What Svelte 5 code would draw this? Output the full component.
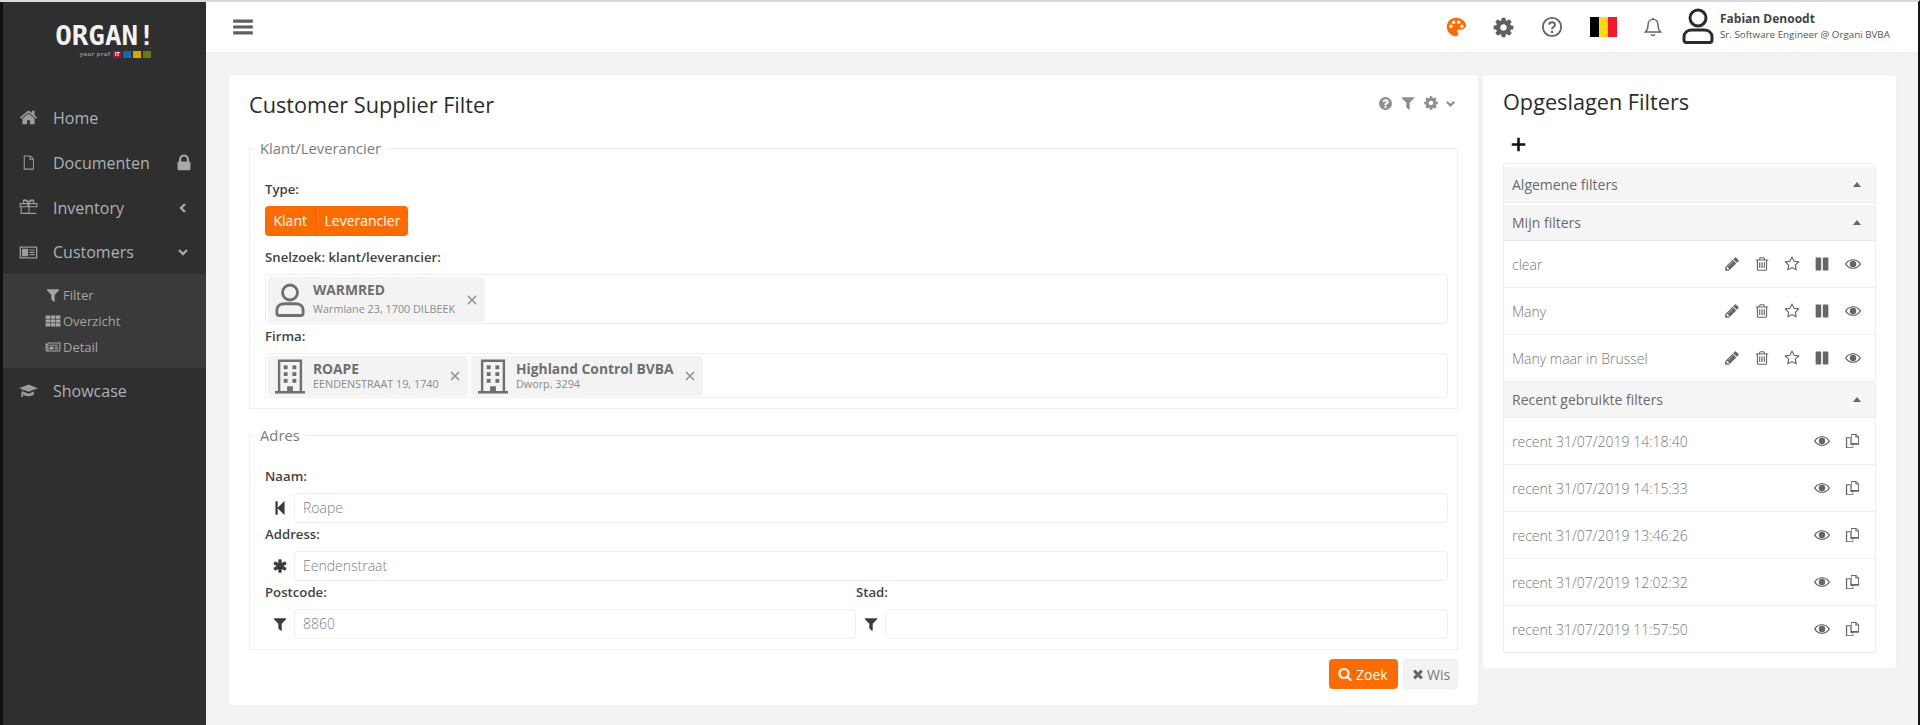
<script>
  const P = {
    home: "M1472 992v480q0 26-19 45t-45 19h-384v-384h-256v384h-384q-26 0-45-19t-19-45v-480q0-1 .5-3t.5-3l575-474 575 474q1 2 1 6zm223-69l-62 74q-8 9-21 11h-3q-13 0-21-7l-692-577-692 577q-12 8-24 7-13-2-21-11l-62-74q-8-10-7-23.500t11-21.500l719-599q32-26 76-26t76 26l244 204v-195q0-14 9-23t23-9h192q14 0 23 9t9 23v408l219 182q10 8 11 21.500t-7 23.500z",
    lock: "M640 768h512v-192q0-106-75-181t-181-75-181 75-75 181v192zm832 96v576q0 40-28 68t-68 28h-960q-40 0-68-28t-28-68v-576q0-40 28-68t68-28h32v-192q0-184 132-316t316-132 316 132 132 316v192h32q40 0 68 28t28 68z",
    filter: "M1595 295q17 41-14 70l-493 493v742q0 42-39 59-13 5-25 5-27 0-45-19l-256-256q-19-19-19-45v-486l-493-493q-31-29-14-70 17-39 59-39h1280q42 0 59 39z",
    cog: "M1152 896q0-106-75-181t-181-75-181 75-75 181 75 181 181 75 181-75 75-181zm512-109v222q0 12-8 23t-20 13l-185 28q-19 54-39 91 35 50 107 138 10 12 10 25t-9 23q-27 37-99 108t-94 71q-12 0-26-9l-138-108q-44 23-91 38-16 136-29 186-7 28-36 28h-222q-14 0-24.500-8.500t-11.500-21.500l-28-184q-49-16-90-37l-141 107q-10 9-25 9-14 0-25-11-126-114-165-168-7-10-7-23 0-12 8-23 15-21 51-66.500t54-70.500q-27-50-41-99l-183-27q-13-2-21-12.500t-8-23.500v-222q0-12 8-23t19-13l186-28q14-46 39-92-40-57-107-138-10-12-10-24 0-10 9-23 26-36 98.500-107.500t94.500-71.500q13 0 26 10l138 107q44-23 91-38 16-136 29-186 7-28 36-28h222q14 0 24.500 8.500t11.500 21.500l28 184q49 16 90 37l142-107q9-9 24-9 13 0 25 10 129 119 165 170 7 8 7 22 0 12-8 23-15 21-51 66.500t-54 70.500q26 50 41 98l183 28q13 2 21 12.500t8 23.500z",
    help: "M1024 1376v-192q0-14-9-23t-23-9h-192q-14 0-23 9t-9 23v192q0 14 9 23t23 9h192q14 0 23-9t9-23zm256-672q0-88-55.500-163t-138.500-116-170-41q-243 0-371 213-15 24 8 42l132 100q7 6 19 6 16 0 25-12 53-68 86-92 34-24 86-24 48 0 85.500 26t37.500 59q0 38-20 61t-68 45q-63 28-115.500 86.500t-52.500 125.500v36q0 14 9 23t23 9h192q14 0 23-9t9-23q0-19 21.500-49.500t54.500-49.500q32-18 49-28.500t46-35 44.500-48 28-60.500 12.500-81zm384 192q0 209-103 385.500t-279.500 279.500-385.500 103-385.500-103-279.500-279.500-103-385.500 103-385.500 279.500-279.500 385.500-103 385.500 103 279.500 279.500 103 385.500z",
    search: "M1216 832q0-185-131.500-316.500t-316.500-131.500-316.500 131.500-131.500 316.500 131.500 316.500 316.500 131.500 316.500-131.500 131.500-316.500zm512 832q0 52-38 90t-90 38q-54 0-90-38l-343-342q-179 124-399 124-143 0-273.500-55.500t-225-150-150-225-55.500-273.500 55.500-273.500 150-225 225-150 273.500-55.500 273.500 55.500 225 150 150 225 55.500 273.500q0 220-124 399l343 343q37 37 37 90z",
    times: "M1490 1322q0 40-28 68l-136 136q-28 28-68 28t-68-28l-294-294-294 294q-28 28-68 28t-68-28l-136-136q-28-28-28-68t28-68l294-294-294-294q-28-28-28-68t28-68l136-136q28-28 68-28t68 28l294 294 294-294q28-28 68-28t68 28l136 136q28 28 28 68t-28 68l-294 294 294 294q28 28 28 68z",
    back: "M1363 141q19-19 32-13t13 32v1472q0 26-13 32t-32-13l-710-710q-9-9-13-19v678q0 26-19 45t-45 19h-128q-26 0-45-19t-19-45v-1408q0-26 19-45t45-19h128q26 0 45 19t19 45v678q4-10 13-19z",
    asterisk: "M1546 1050q46 26 59.500 77.500t-12.500 97.500l-64 110q-26 46-77.500 59.500t-97.500-12.500l-266-153v307q0 52-38 90t-90 38h-128q-52 0-90-38t-38-90v-307l-266 153q-46 26-97.500 12.500t-77.500-59.500l-64-110q-26-46-12.500-97.500t59.500-77.500l266-154-266-154q-46-26-59.500-77.500t12.500-97.500l64-110q26-46 77.500-59.500t97.500 12.500l266 153v-307q0-52 38-90t90-38h128q52 0 90 38t38 90v307l266-153q46-26 97.500-12.500t77.500 59.500l64 110q26 46 12.500 97.500t-59.500 77.500l-266 154z",
    pencil: "M491 1536l91-91-235-235-91 91v107h128v128h107zm523-928q0-22-22-22-10 0-17 7l-542 542q-7 7-7 17 0 22 22 22 10 0 17-7l542-542q7-7 7-17zm-54-192l416 416-832 832h-416v-416zm683 96q0 53-37 90l-166 166-416-416 166-165q36-38 90-38 53 0 91 38l235 234q37 39 37 91z",
    trash: "M704 736v576q0 14-9 23t-23 9h-64q-14 0-23-9t-9-23v-576q0-14 9-23t23-9h64q14 0 23 9t9 23zm256 0v576q0 14-9 23t-23 9h-64q-14 0-23-9t-9-23v-576q0-14 9-23t23-9h64q14 0 23 9t9 23zm256 0v576q0 14-9 23t-23 9h-64q-14 0-23-9t-9-23v-576q0-14 9-23t23-9h64q14 0 23 9t9 23zm128 724v-948h-896v948q0 22 7 40.500t14.500 27 10.500 8.500h832q3 0 10.500-8.500t14.500-27 7-40.500zm-672-1076h448l-48-117q-7-9-17-11h-317q-10 2-17 11zm928 32v64q0 14-9 23t-23 9h-96v948q0 83-47 143.500t-113 60.500h-832q-66 0-113-58.500t-47-141.500v-952h-96q-14 0-23-9t-9-23v-64q0-14 9-23t23-9h309l70-167q15-37 54-63t79-26h320q40 0 79 26t54 63l70 167h309q14 0 23 9t9 23z",
    star: "M1201 1004l306-297-422-62-189-382-189 382-422 62 306 297-73 421 378-199 377 199zm527-357q0 22-26 48l-363 354 86 500q1 7 1 20 0 50-41 50-19 0-40-12l-449-236-449 236q-22 12-40 12-21 0-31.500-14.500t-10.500-35.500q0-6 2-20l86-500-364-354q-25-27-25-48 0-37 56-46l502-73 225-455q19-41 49-41t49 41l225 455 502 73q56 9 56 46z",
    pause: "M265 168h460q80 0 80 80v1296q0 80-80 80h-460q-80 0-80-80v-1296q0-80 80-80zM1067 168h460q80 0 80 80v1296q0 80-80 80h-460q-80 0-80-80v-1296q0-80 80-80z",
    plus: "M1030 180h-268v582h-582v268h582v582h268v-582h582v-268h-582z",
    bars: "M96 288h1600v256h-1600zM96 768h1600v256h-1600zM96 1248h1600v256h-1600z",
    th: "M64 288h512v352h-512zM640 288h512v352h-512zM1216 288h512v352h-512zM64 720h512v352h-512zM640 720h512v352h-512zM1216 720h512v352h-512zM64 1152h512v352h-512zM640 1152h512v352h-512zM1216 1152h512v352h-512z",
    eye: "M896 416c-380 0-690 260-800 480 110 220 420 480 800 480s690-260 800-480c-110-220-420-480-800-480zm0 112c270 0 520 160 650 368-130 208-380 368-650 368s-520-160-650-368c130-208 380-368 650-368zm0 48a320 320 0 1 0 0 640 320 320 0 0 0 0-640z",
    copy: "M800 192h512l288 288v800h-576v320h-736v-1088h512zm64 96v816h640v-560h-272v-256zm464 24v144h144zm-592 304h-320v896h544v-224h-224z",
    file: "M448 224h640l320 320v1024h-960zm96 96v1152h768v-832h-320v-320zm544 32v192h192z",
    idcard: "M64 320h1664v1152h-1664zm128 128v896h1408v-896zm96 96h576v704h-576zm700 64h480v110h-480zm0 220h480v110h-480zm0 220h480v110h-480z",
    gift: "M896 330c-120-260-560-280-560 0 0 70 40 120 100 150h-380v400h96v620h1488v-620h96v-400h-380c60-30 100-80 100-150 0-280-440-260-560 0zm-60 150h-220c-100 0-180-60-160-130 30-80 290-60 380 130zm120 0c90-190 350-210 380-130 20 70-60 130-160 130zm-800 100h640v200h-640zm740 0h0v200h0zm100 0h640v200h-640zm-740 300h640v520h-640zm740 0h640v520h-640z",
    cap: "M896 320l896 352-896 352-500-196c-40 50-60 130-64 220 40 20 64 50 64 90 0 30-14 56-36 74l36 300h-192l36-300c-22-18-36-44-36-74 0-42 26-72 64-92 4-110 26-200 70-266l-338-108zm-510 680v260c0 100 230 180 510 180s510-80 510-180v-260l-510 200z",
    news: "M64 512h256v-128h1408v896c0 70-50 128-128 128h-1408c-70 0-128-58-128-128zm128 128v640h64v-640zm192-128v768h1216v-768zm128 128h960v128h-960zm0 224h448v320h-448zm576 0h384v128h-384zm0 192h384v128h-384z"
  };

  const menuTop = [
    { icon: "home", label: "Home" },
    { icon: "file", label: "Documenten", right: "lock" },
    { icon: "gift", label: "Inventory", right: "left" },
    { icon: "idcard", label: "Customers", right: "down" }
  ];
  const sub = [
    { icon: "filter", label: "Filter" },
    { icon: "th", label: "Overzicht" },
    { icon: "news", label: "Detail" }
  ];
  const mine = ["clear", "Many", "Many maar in Brussel"];
  const recent = [
    "recent 31/07/2019 14:18:40",
    "recent 31/07/2019 14:15:33",
    "recent 31/07/2019 13:46:26",
    "recent 31/07/2019 12:02:32",
    "recent 31/07/2019 11:57:50"
  ];
</script>

{#snippet ic(name, cls)}
  <svg class="ic {cls}" viewBox="0 0 1792 1792" fill="currentColor" aria-hidden="true"><path fill-rule="evenodd" d={P[name]} /></svg>
{/snippet}

{#snippet person(cls)}
  <svg class={cls} viewBox="0 0 32 36" fill="none" stroke="currentColor" stroke-width="3" aria-hidden="true">
    <circle cx="16" cy="10" r="8" />
    <path d="M10 22h12c4.500 0 8 2.500 8 7v3c0 1.500-1 2.500-2.500 2.500h-23c-1.500 0-2.500-1-2.500-2.500v-3c0-4.500 3.500-7 8-7z" />
  </svg>
{/snippet}

{#snippet building()}
  <svg class="chip-ic building" viewBox="0 0 31 35" fill="#6f6f6f" aria-hidden="true">
    <path fill-rule="evenodd" d="M3 0h25v32.500h3v2.500h-31v-2.500h3zm2.500 2.500v30h7v-5h6v5h7v-30z" />
    <rect x="9" y="6" width="4" height="4" /><rect x="18" y="6" width="4" height="4" />
    <rect x="9" y="13" width="4" height="4" /><rect x="18" y="13" width="4" height="4" />
    <rect x="9" y="20" width="4" height="4" /><rect x="18" y="20" width="4" height="4" />
  </svg>
{/snippet}

{#snippet chev(dir, cls)}
  <svg class={cls} viewBox="0 0 12 12" fill="none" stroke="currentColor" stroke-width="2.400" aria-hidden="true">
    {#if dir === "down"}<path d="M2 4l4 4 4-4" />{:else}<path d="M8 2L4 6l4 4" />{/if}
  </svg>
{/snippet}

{#snippet chip(kind, title, subtitle, cls)}
  <div class="chip {cls}">
    {#if kind === "person"}
      {@render person("chip-ic person")}
    {:else}
      {@render building()}
    {/if}
    <div class="chip-text">
      <div class="chip-title">{title}</div>
      <div class="chip-sub">{subtitle}</div>
    </div>
    <svg class="chip-x" viewBox="0 0 10 10" fill="none" stroke="#8f8f8f" stroke-width="1.500" aria-hidden="true"><path d="M1 1l8 8M9 1L1 9" /></svg>
  </div>
{/snippet}

{#snippet accHead(title)}
  <div class="acc-head"><span>{title}</span><i class="caret"></i></div>
{/snippet}

<div class="page">
  <aside class="sidebar">
    <div class="logo">
      <div class="logo-word">ORGAN!</div>
      <div class="logo-tag">
        <span class="tag-text">your prof</span><span class="sq it">IT</span><span class="sq blue"></span><span class="sq yellow"></span><span class="sq green"></span>
      </div>
    </div>
    <nav class="menu">
      {#each menuTop as m}
        <div class="item">
          {@render ic(m.icon, "item-ic")}
          <span class="item-label">{m.label}</span>
          {#if m.right === "lock"}
            {@render ic("lock", "item-lock")}
          {:else if m.right}
            {@render chev(m.right, "item-chev")}
          {/if}
        </div>
      {/each}
      <div class="submenu">
        {#each sub as s}
          <div class="sub-item">{@render ic(s.icon, "sub-ic")}<span>{s.label}</span></div>
        {/each}
      </div>
      <div class="item">
        {@render ic("cap", "item-ic")}
        <span class="item-label">Showcase</span>
      </div>
    </nav>
  </aside>

  <div class="right-side">
    <header class="topbar">
      {@render ic("bars", "burger")}
      <div class="top-tools">
        <svg class="palette" viewBox="0 0 24 24" aria-hidden="true">
          <path fill="#fd6c02" fill-rule="evenodd" d="M12 2C6 2 2 6.500 2 12c0 5.500 4.500 10 10 10 1.500 0 2.500-1 2.500-2.300 0-.7-.3-1.200-.6-1.700-.3-.5-.5-.9-.5-1.400 0-1.100.9-1.800 2-1.800h2.300c3 0 5.300-2.200 5.300-5C22 5.300 17.500 2 12 2zM6.500 13a1.800 1.800 0 1 1 0-3.600 1.800 1.800 0 0 1 0 3.600zm3-4.500a1.800 1.800 0 1 1 0-3.600 1.800 1.800 0 0 1 0 3.600zm5.500 0a1.800 1.800 0 1 1 0-3.600 1.800 1.800 0 0 1 0 3.600zm3.500 4.500a1.800 1.800 0 1 1 0-3.600 1.800 1.800 0 0 1 0 3.600z" />
        </svg>
        {@render ic("cog", "tool-cog")}
        <svg class="tool-q" viewBox="0 0 24 24" fill="none" stroke="#666" aria-hidden="true">
          <circle cx="12" cy="12" r="10" stroke-width="2" />
          <path d="M8.800 9.500C9 7.500 10.400 6.700 12 6.700c1.800 0 3.200 1.100 3.200 2.800 0 2.600-3.200 2.500-3.200 5" stroke-width="2.200" />
          <circle cx="12" cy="17.500" r="1.400" fill="#666" stroke="none" />
        </svg>
        <div class="flag"><i class="f-b"></i><i class="f-y"></i><i class="f-r"></i></div>
        <svg class="tool-bell" viewBox="0 0 20 22" fill="none" stroke="#666" stroke-width="1.600" aria-hidden="true">
          <path d="M10 2.500c-3.500 0-5.500 2.500-5.500 6 0 5-1.500 6.500-3 8h17c-1.500-1.500-3-3-3-8 0-3.500-2-6-5.500-6z" />
          <path d="M10 .8v1.700M7.800 19c.5 1 1.200 1.500 2.200 1.500s1.700-.5 2.200-1.500" />
        </svg>
        <div class="user">
          {@render person("user-ic")}
          <div class="user-text">
            <div class="user-name">Fabian Denoodt</div>
            <div class="user-sub">Sr. Software Engineer @ Organi BVBA</div>
          </div>
        </div>
      </div>
    </header>

    <main class="content">
      <section class="card main-card">
        <div class="card-head">
          <h1>Customer Supplier Filter</h1>
          <div class="head-tools">
            {@render ic("help", "ht-help")}
            {@render ic("filter", "ht-filter")}
            {@render ic("cog", "ht-cog")}
            {@render chev("down", "ht-chev")}
          </div>
        </div>

        <fieldset class="fs fs-one">
          <legend>Klant/Leverancier</legend>
          <div class="lbl lbl-type">Type:</div>
          <div class="btn-group"><span class="seg">Klant</span><span class="seg">Leverancier</span></div>
          <div class="lbl lbl-quick">Snelzoek: klant/leverancier:</div>
          <div class="pick pick-tall">
            {@render chip("person", "WARMRED", "Warmlane 23, 1700 DILBEEK", "chip-a")}
          </div>
          <div class="lbl lbl-firm">Firma:</div>
          <div class="pick pick-short">
            {@render chip("building", "ROAPE", "EENDENSTRAAT 19, 1740", "chip-b")}
            {@render chip("building", "Highland Control BVBA", "Dworp, 3294", "chip-c")}
          </div>
        </fieldset>

        <fieldset class="fs fs-two">
          <legend>Adres</legend>
          <div class="lbl lbl-name">Naam:</div>
          <div class="inp-row">
            <span class="inp-ic">{@render ic("back", "field-ic")}</span>
            <div class="inp">Roape</div>
          </div>
          <div class="lbl lbl-addr">Address:</div>
          <div class="inp-row">
            <span class="inp-ic">{@render ic("asterisk", "field-ic")}</span>
            <div class="inp">Eendenstraat</div>
          </div>
          <div class="two">
            <div>
              <div class="lbl lbl-addr">Postcode:</div>
              <div class="inp-row">
                <span class="inp-ic">{@render ic("filter", "field-ic")}</span>
                <div class="inp">8860</div>
              </div>
            </div>
            <div>
              <div class="lbl lbl-addr">Stad:</div>
              <div class="inp-row">
                <span class="inp-ic">{@render ic("filter", "field-ic")}</span>
                <div class="inp"></div>
              </div>
            </div>
          </div>
        </fieldset>

        <div class="actions">
          <div class="btn btn-zoek">{@render ic("search", "btn-ic")}Zoek</div>
          <div class="btn btn-wis">{@render ic("times", "btn-ic")}Wis</div>
        </div>
      </section>

      <section class="card side-card">
        <h2>Opgeslagen Filters</h2>
        <div class="plus-row">{@render ic("plus", "plus")}</div>
        <div class="acc">
          {@render accHead("Algemene filters")}
          {@render accHead("Mijn filters")}
          {#each mine as f}
            <div class="acc-row">
              <span class="row-text">{f}</span>
              <div class="row-ics five">
                {@render ic("pencil", "r-ic")}
                {@render ic("trash", "r-ic")}
                {@render ic("star", "r-ic")}
                {@render ic("pause", "r-ic")}
                {@render ic("eye", "r-ic big")}
              </div>
            </div>
          {/each}
          {@render accHead("Recent gebruikte filters")}
          {#each recent as f}
            <div class="acc-row">
              <span class="row-text">{f}</span>
              <div class="row-ics two-ics">
                {@render ic("eye", "r-ic big")}
                {@render ic("copy", "r-ic big")}
              </div>
            </div>
          {/each}
        </div>
      </section>
    </main>
  </div>
</div>

<style>
  :global(body) { margin: 0; background: #f3f3f3; }
  .page {
    display: flex;
    width: 1920px;
    height: 725px;
    overflow: hidden;
    box-sizing: border-box;
    border-top: 2px solid #d9d9d9;
    border-right: 2px solid #151515;
    font-family: "Open Sans", "Liberation Sans", sans-serif;
    color: #555;
    background: #f3f3f3;
  }
  .ic { display: block; flex: none; }

  .sidebar {
    width: 206px;
    flex: none;
    box-sizing: border-box;
    border-left: 3px solid #101010;
    background: #2f2f2f;
    color: #a5acb1;
  }
  .logo { height: 71px; padding-top: 22px; box-sizing: border-box; display: flex; flex-direction: column; align-items: center; }
  .logo-word {
    font-family: "DejaVu Sans Mono", monospace;
    font-size: 26px;
    line-height: 24px;
    color: #f2f2f2;
    font-weight: 700;
    transform: scaleX(1.06);
  }
  .logo-tag { display: flex; align-items: center; gap: 2px; margin-top: 2px; padding-left: 22px; height: 8px; }
  .tag-text { font-size: 6px; line-height: 8px; color: #8f8f8f; margin-right: 1px; font-weight: 700; letter-spacing: .3px; }
  .sq { width: 8px; height: 7px; display: block; font-size: 5.500px; line-height: 7px; text-align: center; color: #fff; font-weight: 700; }
  .it { background: #a5123f; }
  .blue { background: #0a6fa8; }
  .yellow { background: #d9a300; }
  .green { background: #5f7f12; }

  .menu { padding-top: 22px; }
  .item { height: 45px; display: flex; align-items: center; position: relative; padding-left: 16px; font-size: 16px; }
  .item:nth-child(4) { height: 44px; }
  .item-label { margin-left: 15px; color: #a9b2b8; }
  :global(.item-ic) { width: 19px; height: 19px; color: #9c9c9c; }
  :global(.item-lock) { width: 20px; height: 20px; margin-left: auto; margin-right: 12px; color: #a8a8a8; }
  :global(.item-chev) { width: 12px; height: 12px; margin-left: auto; margin-right: 17px; color: #a8a8a8; }
  .submenu { height: 94px; background: #3a3a3a; padding-top: 8px; box-sizing: border-box; }
  .sub-item { height: 26px; display: flex; align-items: center; padding-left: 42px; gap: 2px; font-size: 13px; color: #a5a5a5; }
  :global(.sub-ic) { width: 16px; height: 16px; color: #a5a5a5; }

  .right-side { flex: 1; min-width: 0; display: flex; flex-direction: column; }
  .topbar {
    height: 50px;
    flex: none;
    display: flex;
    align-items: center;
    background: #fff;
    box-shadow: 0 1px 2px rgba(0,0,0,.03);
    padding-left: 26px;
  }
  :global(.burger) { width: 22px; height: 22px; color: #5f5f5f; }
  .top-tools { margin-left: auto; display: flex; align-items: center; width: 471px; height: 50px; box-sizing: border-box; }
  .palette { width: 22px; height: 22px; margin-left: -2px; flex: none; }
  :global(.tool-cog) { width: 23px; height: 23px; margin-left: 25px; color: #5f5f5f; }
  .tool-q { width: 22px; height: 22px; margin-left: 26px; flex: none; }
  .flag { display: flex; width: 27px; height: 20px; margin-left: 27px; flex: none; }
  .flag i { flex: 1; display: block; }
  .f-b { background: #000; }
  .f-y { background: #ffd90c; }
  .f-r { background: #f31830; }
  .tool-bell { width: 18px; height: 20px; margin-left: 27px; flex: none; }
  .user { display: flex; align-items: center; margin-left: 20px; }
  :global(.user-ic) { width: 32px; height: 36px; color: #2b2b2b; flex: none; margin-top: -2px; }
  .user-text { margin-left: 6px; white-space: nowrap; margin-top: -2px; }
  .user-name { font-size: 12px; line-height: 16px; font-weight: 700; color: #444; }
  .user-sub { font-size: 9.800px; line-height: 14px; color: #555; margin-top: 1px; }

  .content { flex: 1; display: flex; align-items: flex-start; padding: 23px 0 0 23px; gap: 5px; }
  .card { background: #fff; border-radius: 4px; box-sizing: border-box; box-shadow: 0 0 3px rgba(0,0,0,.04); }
  .main-card { width: 1249px; height: 630px; padding: 0 20px; }
  .card-head { height: 63px; display: flex; align-items: center; justify-content: space-between; }
  h1, h2 { margin: 0; font-size: 21.700px; font-weight: 500; color: #2c2c2c; line-height: 28px; }
  h1 { margin-top: -3px; }
  .head-tools { display: flex; align-items: center; gap: 7px; color: #8f8f8f; margin-top: -7px; padding-right: 2px; }
  :global(.ht-help) { width: 15px; height: 15px; }
  :global(.ht-filter) { width: 16px; height: 16px; }
  :global(.ht-cog) { width: 16px; height: 16px; }
  .head-tools :global(.ht-chev) { width: 11px; height: 11px; margin-left: -1px; }

  .fs { margin: 0; border: 1px solid #eee; padding: 0 9px 0 15px; min-width: 0; box-sizing: border-box; }
  .fs-one { height: 271px; }
  .fs-two { height: 225px; margin-top: 16px; }
  legend { margin-left: -10px; padding: 0 6px 0 5px; font-size: 14.800px; line-height: 20px; color: #7d7d7d; font-weight: 400; }
  .lbl { font-size: 13.200px; line-height: 18px; font-weight: 600; color: #444; }
  .lbl-type { margin-top: 22px; }
  .btn-group { display: inline-flex; margin-top: 8px; height: 30px; background: #fd6c02; border-radius: 4px; color: #fff; font-size: 14px; line-height: 30px; vertical-align: top; }
  .seg { padding: 0 8px 0 8.500px; }
  .seg + .seg { border-left: 1px solid #ee6500; }
  .lbl-quick { margin-top: 12px; }
  .pick { margin-top: 8px; border: 1px solid #eee; border-radius: 4px; display: flex; gap: 3px; padding: 2px; box-sizing: border-box; }
  .pick-tall { height: 50px; }
  .pick-short { height: 45px; margin-top: 8px; }
  .lbl-firm { margin-top: 3px; }
  .chip { display: flex; align-items: center; background: #f3f3f3; border-radius: 4px; box-sizing: border-box; position: relative; }
  .chip-a { width: 217px; height: 45px; }
  .chip-b { width: 200px; height: 40px; }
  .chip-c { width: 232px; height: 40px; }
  .chip-ic { flex: none; }
  :global(.person) { width: 30px; height: 34px; color: #707070; margin-left: 7px; }
  .building { width: 30px; height: 35px; margin-left: 7px; }
  .chip-text { margin-left: 8px; flex: 1; min-width: 0; white-space: nowrap; margin-top: -2px; }
  .chip-title { font-size: 13.800px; line-height: 17px; font-weight: 700; color: #6f6f6f; }
  .chip-sub { font-size: 10.800px; line-height: 14px; color: #8b8b8b; font-weight: 400; }
  .chip-a .chip-sub { margin-top: 4px; }
  .chip-x { width: 10px; height: 10px; flex: none; margin-right: 8px; }

  .lbl-name { margin-top: 22px; }
  .inp-row { display: flex; align-items: center; margin-top: 8px; }
  .inp-ic { width: 29px; flex: none; display: flex; justify-content: center; }
  :global(.field-ic) { width: 16px; height: 16px; color: #3c3c3c; }
  .inp {
    flex: 1;
    height: 30px;
    box-sizing: border-box;
    border: 1px solid #eee;
    border-radius: 4px;
    padding: 0 8px;
    font-size: 14px;
    line-height: 28px;
    color: #808080;
    font-weight: 300;
  }
  .lbl-addr { margin-top: 2px; }
  .two { display: grid; grid-template-columns: 591px 592px; margin-top: 2px; }
  .two .lbl-addr { margin-top: 0; }

  .actions { display: flex; justify-content: flex-end; gap: 5px; margin-top: 9px; }
  .btn { height: 30px; box-sizing: border-box; border-radius: 4px; display: flex; align-items: center; gap: 4px; font-size: 14px; }
  .btn-zoek { width: 69px; background: #fd6c02; color: #fff; padding-left: 9px; }
  .btn-wis { width: 55px; background: #f3f3f3; border: 1px solid #ececec; color: #7a7a7a; padding-left: 7px; gap: 2px; }
  :global(.btn-ic) { width: 14px; height: 14px; }
  .btn-wis :global(.btn-ic) { color: #666; }

  .side-card { width: 413px; height: 593px; padding: 0 20px; }
  h2 { padding-top: 13px; }
  .plus-row { height: 47px; padding-left: 7px; padding-top: 20px; box-sizing: border-box; }
  :global(.plus) { width: 17px; height: 17px; color: #111; }
  .acc { border: 1px solid #eee; border-radius: 3px 3px 0 0; height: 490px; padding-top: 3px; box-sizing: border-box; width: 373px; }
  .acc-head {
    height: 36px;
    background: #f5f5f5;
    border-bottom: 1px solid #eaeaea;
    display: flex;
    align-items: center;
    justify-content: space-between;
    padding: 0 14px 0 8px;
    font-size: 14px;
    color: #6a6a6a;
    box-sizing: border-box;
  }
  .acc-head + .acc-head { margin-top: 2px; }
  .caret { width: 0; height: 0; border-left: 4px solid transparent; border-right: 4px solid transparent; border-bottom: 5px solid #666; display: block; }
  .acc-row {
    height: 47px;
    display: flex;
    align-items: center;
    justify-content: space-between;
    border-bottom: 1px solid #eee;
    padding: 0 13px 0 8px;
    box-sizing: border-box;
    font-size: 14px;
    color: #777;
  }
  .acc-row:last-child { border-bottom: 0; height: 46px; }
  .row-text { font-weight: 300; }
  .row-ics { display: flex; align-items: center; }
  .five { gap: 14px; }
  .two-ics { gap: 12px; padding-right: 1px; }
  :global(.r-ic) { width: 16px; height: 16px; color: #666; }
  :global(.r-ic.big) { width: 18px; height: 18px; }
</style>
